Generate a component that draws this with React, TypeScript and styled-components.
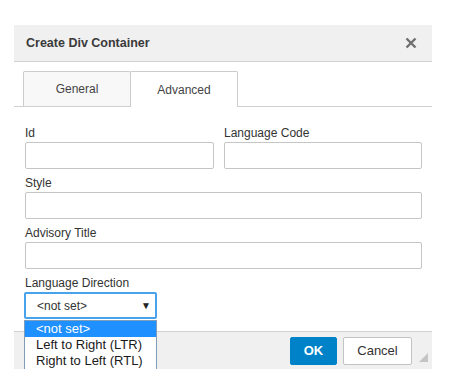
import styled, { createGlobalStyle } from 'styled-components';

const GlobalStyle = createGlobalStyle`
  body {
    margin: 0;
    background: #ffffff;
    font-family: 'Liberation Sans', Arial, sans-serif;
    color: #333333;
  }
`;

const Dialog = styled.div`
  position: relative;
  margin: 25px 0 0 14px;
  width: 418px;
  background: #ffffff;
`;

const Header = styled.div`
  height: 36px;
  display: flex;
  align-items: center;
  justify-content: space-between;
  padding: 0 12px;
  background: #f0f0f0;
  border-bottom: 1px solid #d1d1d1;
`;

const Title = styled.div`
  font-size: 12.5px;
  font-weight: bold;
  color: #3a3a3a;
`;

const Close = styled.div`
  display: flex;
  width: 14px;
  height: 14px;
  margin-right: 2px;
`;

const TabBar = styled.div`
  display: flex;
  padding: 9px 0 0 9px;
  border-bottom: 1px solid #d1d1d1;
`;

const Tab = styled.div<{ $active?: boolean }>`
  width: 106px;
  display: flex;
  align-items: center;
  justify-content: center;
  font-size: 12px;
  color: #444444;
  background: ${(p) => (p.$active ? '#ffffff' : '#f8f8f8')};
  border: 1px solid #cccccc;
  border-bottom: none;
  border-radius: 2px 2px 0 0;
  margin-bottom: ${(p) => (p.$active ? '-1px' : '0')};
  height: ${(p) => (p.$active ? '35px' : '34px')};
  & + & {
    margin-left: -1px;
  }
`;

const Body = styled.div`
  padding: 18px 10px 12px 11px;
  display: flex;
  flex-direction: column;
  gap: 6px;
`;

const Row = styled.div`
  display: grid;
  grid-template-columns: 189px 1fr;
  column-gap: 10px;
`;

const Field = styled.div`
  display: flex;
  flex-direction: column;
`;

const Label = styled.label`
  font-size: 12px;
  line-height: 17px;
  color: #333333;
`;

const Input = styled.input`
  box-sizing: border-box;
  height: 27px;
  width: 100%;
  margin: 0;
  border: 1px solid #c5c5c5;
  border-radius: 2px;
  background: #ffffff;
  outline: none;
`;

const SelectWrap = styled.div`
  position: relative;
  width: 133px;
  margin-left: -1px;
`;

const SelectBox = styled.div`
  box-sizing: border-box;
  height: 27px;
  display: flex;
  align-items: center;
  justify-content: space-between;
  padding: 0 4px 0 11px;
  border: 2px solid #49a3ec;
  border-radius: 2px;
  font-size: 12px;
  color: #333333;
  background: #ffffff;
`;

const Arrow = styled.span`
  font-size: 10px;
  color: #222222;
`;

const Menu = styled.div`
  position: absolute;
  top: 28px;
  left: 0;
  width: 133px;
  box-sizing: border-box;
  border: 1px solid #7f9db9;
  background: #ffffff;
  z-index: 2;
`;

const Option = styled.div<{ $selected?: boolean }>`
  height: 16px;
  line-height: 16px;
  padding-left: 11px;
  font-size: 13px;
  color: ${(p) => (p.$selected ? '#ffffff' : '#1a1a1a')};
  background: ${(p) => (p.$selected ? '#1e90ff' : 'transparent')};
`;

const Footer = styled.div`
  position: relative;
  height: 37px;
  display: flex;
  align-items: center;
  justify-content: flex-end;
  gap: 6px;
  padding: 0 20px 0 0;
  background: #f0f0f0;
  border-top: 1px solid #d1d1d1;
`;

const Button = styled.button<{ $primary?: boolean }>`
  box-sizing: border-box;
  height: 28px;
  margin: 0;
  padding: 0;
  font-family: 'Liberation Sans', Arial, sans-serif;
  font-size: 13px;
  font-weight: ${(p) => (p.$primary ? 'bold' : 'normal')};
  color: ${(p) => (p.$primary ? '#ffffff' : '#333333')};
  background: ${(p) => (p.$primary ? '#0082c8' : '#ffffff')};
  border: 1px solid ${(p) => (p.$primary ? '#0082c8' : '#c3c3c3')};
  border-radius: 2px;
  width: ${(p) => (p.$primary ? '47px' : '69px')};
`;

const Grip = styled.div`
  position: absolute;
  right: 4px;
  bottom: 7px;
  width: 9px;
  height: 9px;
  display: flex;
`;

export default function App() {
  return (
    <>
      <GlobalStyle />
      <Dialog>
        <Header>
          <Title>Create Div Container</Title>
          <Close>
            <svg width="14" height="14" viewBox="0 0 14 14">
              <path d="M2.5 2.5 L11.5 11.5 M11.5 2.5 L2.5 11.5" stroke="#6f6f6f" strokeWidth="2.4" />
            </svg>
          </Close>
        </Header>
        <TabBar>
          <Tab>General</Tab>
          <Tab $active>Advanced</Tab>
        </TabBar>
        <Body>
          <Row>
            <Field>
              <Label>Id</Label>
              <Input />
            </Field>
            <Field>
              <Label>Language Code</Label>
              <Input />
            </Field>
          </Row>
          <Field>
            <Label>Style</Label>
            <Input />
          </Field>
          <Field>
            <Label>Advisory Title</Label>
            <Input />
          </Field>
          <Field>
            <Label>Language Direction</Label>
            <SelectWrap>
              <SelectBox>
                <span>&lt;not set&gt;</span>
                <Arrow>▼</Arrow>
              </SelectBox>
              <Menu>
                <Option $selected>&lt;not set&gt;</Option>
                <Option>Left to Right (LTR)</Option>
                <Option>Right to Left (RTL)</Option>
              </Menu>
            </SelectWrap>
          </Field>
        </Body>
        <Footer>
          <Button $primary>OK</Button>
          <Button>Cancel</Button>
          <Grip>
            <svg width="9" height="9" viewBox="0 0 9 9">
              <path d="M9 0 L9 9 L0 9 Z" fill="#c4c4c4" />
            </svg>
          </Grip>
        </Footer>
      </Dialog>
    </>
  );
}
